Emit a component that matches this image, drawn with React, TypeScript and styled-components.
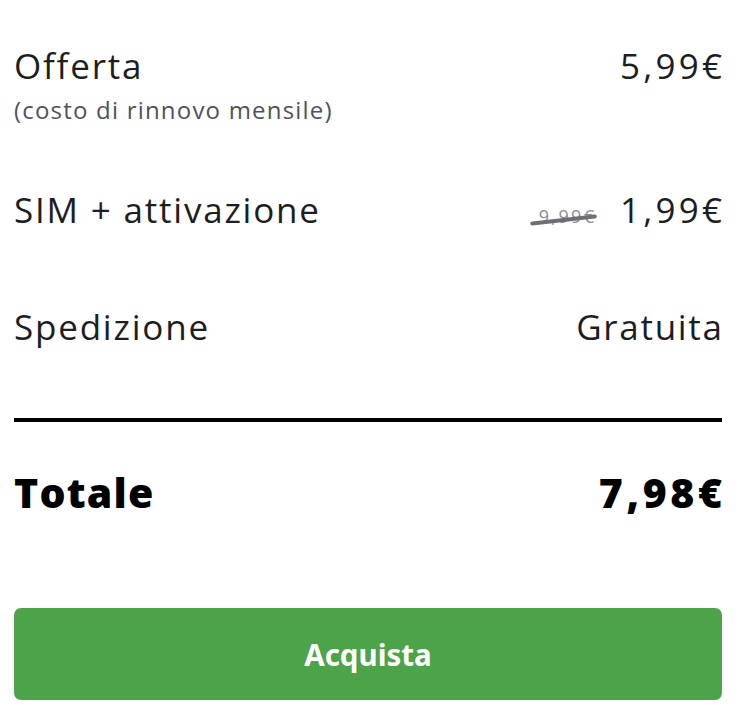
import React from "react";
import styled, { createGlobalStyle } from "styled-components";

const Global = createGlobalStyle`
  html, body { margin: 0; padding: 0; background: #ffffff; }
  body { font-family: "Open Sans", "Noto Sans", sans-serif; }
`;

const Wrapper = styled.div`
  padding: 0 24px 0 14px;
  display: flex;
  flex-direction: column;
`;

const Row = styled.div<{ $top: number }>`
  display: flex;
  justify-content: space-between;
  align-items: flex-start;
  margin-top: ${(p) => p.$top}px;
`;

const LabelCol = styled.div`
  display: flex;
  flex-direction: column;
`;

const Label = styled.div`
  font-size: 35px;
  line-height: 40px;
  letter-spacing: 1.8px;
  color: #1c1e22;
`;

const Sub = styled.div`
  font-size: 24px;
  line-height: 30px;
  letter-spacing: 1.2px;
  color: #4b545d;
  margin-top: 9px;
`;

const PriceGroup = styled.div`
  display: flex;
  align-items: baseline;
  gap: 26px;
`;

const Price = styled.div<{ $spacing?: number }>`
  font-size: 35px;
  line-height: 40px;
  letter-spacing: ${(p) => p.$spacing ?? 1.7}px;
  margin-right: -${(p) => p.$spacing ?? 1.7}px;
  color: #1c1e22;
`;

const OldPrice = styled.span`
  position: relative;
  font-size: 18px;
  letter-spacing: 2.4px;
  margin-right: -2.4px;
  color: #8a8d94;
  &::after {
    content: "";
    position: absolute;
    left: -9px;
    right: 0;
    top: 60%;
    height: 3.5px;
    border-radius: 2px;
    background: #6c6f77;
    transform: rotate(-6.5deg);
  }
`;

const Divider = styled.hr`
  border: none;
  height: 4px;
  background: #000;
  margin: 71px 0 0;
`;

const TotalRow = styled.div`
  display: flex;
  justify-content: space-between;
  align-items: baseline;
  margin-top: 46px;
`;

const TotalText = styled.div<{ $spacing: number }>`
  font-size: 41px;
  line-height: 48px;
  font-weight: 800;
  letter-spacing: ${(p) => p.$spacing}px;
  color: #000;
  &:last-child {
    margin-right: -${(p) => p.$spacing}px;
  }
`;

const BuyButton = styled.button`
  margin-top: 92px;
  height: 92px;
  border: none;
  border-radius: 7px;
  background: #4ca34a;
  color: #fff;
  font-family: "Noto Sans", sans-serif;
  font-weight: 700;
  font-size: 29.5px;
  cursor: pointer;
`;

export default function App() {
  return (
    <>
      <Global />
      <Wrapper>
        <Row $top={46}>
          <LabelCol>
            <Label>Offerta</Label>
            <Sub>(costo di rinnovo mensile)</Sub>
          </LabelCol>
          <Price $spacing={3.2}>5,99€</Price>
        </Row>
        <Row $top={65}>
          <Label>SIM + attivazione</Label>
          <PriceGroup>
            <OldPrice>9,99€</OldPrice>
            <Price $spacing={3.2}>1,99€</Price>
          </PriceGroup>
        </Row>
        <Row $top={77}>
          <Label>Spedizione</Label>
          <Price>Gratuita</Price>
        </Row>
        <Divider />
        <TotalRow>
          <TotalText $spacing={1.2}>Totale</TotalText>
          <TotalText $spacing={3.6}>7,98€</TotalText>
        </TotalRow>
        <BuyButton>Acquista</BuyButton>
      </Wrapper>
    </>
  );
}
